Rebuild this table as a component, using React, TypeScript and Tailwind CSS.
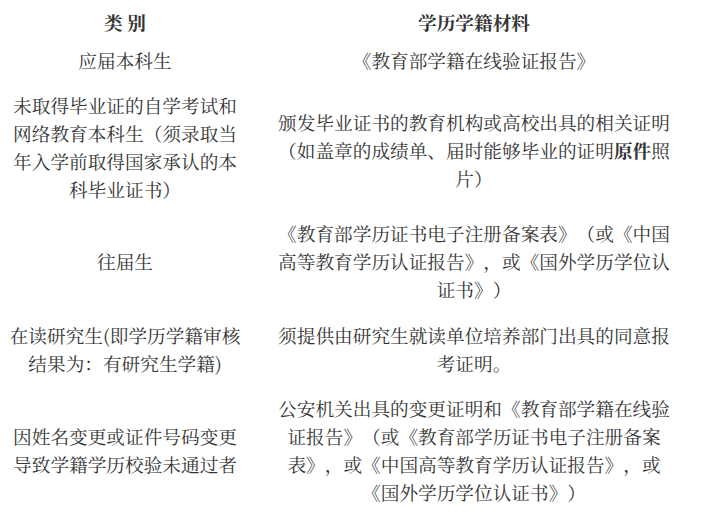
import React from "react";

type Row = {
  left: React.ReactNode;
  right: React.ReactNode;
  pad: string;
  rightPad?: string;
};

const rows: Row[] = [
  {
    left: "应届本科生",
    right: "《教育部学籍在线验证报告》",
    pad: "pt-[5px] pb-[8px]",
  },
  {
    left: "未取得毕业证的自学考试和网络教育本科生（须录取当年入学前取得国家承认的本科毕业证书）",
    right: (
      <>
        颁发毕业证书的教育机构或高校出具的相关证明（如盖章的成绩单、届时能够毕业的证明
        <b className="font-bold">原件</b>照片）
      </>
    ),
    pad: "pt-[9px] pb-[8px]",
    rightPad: "pt-[6px]",
  },
  {
    left: "往届生",
    right: "《教育部学历证书电子注册备案表》（或《中国高等教育学历认证报告》，或《国外学历学位认证书》）",
    pad: "pt-[8px] pb-[9px]",
  },
  {
    left: "在读研究生(即学历学籍审核结果为：有研究生学籍)",
    right: "须提供由研究生就读单位培养部门出具的同意报考证明。",
    pad: "pt-[9px] pb-[8px]",
  },
  {
    left: "因姓名变更或证件号码变更导致学籍学历校验未通过者",
    right: "公安机关出具的变更证明和《教育部学籍在线验证报告》（或《教育部学历证书电子注册备案表》，或《中国高等教育学历认证报告》，或《国外学历学位认证书》）",
    pad: "pt-[9px] pb-[8px]",
  },
];

export default function App() {
  return (
    <div
      className="w-[702px] h-[518px] bg-white text-[#333] text-[18.67px] leading-[28px] overflow-hidden [text-spacing-trim:space-all]"
      style={{
        fontFamily:
          '"Noto Serif CJK SC", "Liberation Serif", "Noto Sans CJK SC", serif',
      }}
    >
      <div className="grid grid-cols-[250px_448px]">
        {/* 表头 */}
        <div className="px-[8px] pt-[8px] pb-[5px] text-center font-bold">
          类 别
        </div>
        <div className="px-[24px] pt-[8px] pb-[5px] text-center font-bold">
          学历学籍材料
        </div>

        {rows.map((r, i) => (
          <React.Fragment key={i}>
            <div
              className={`flex items-center justify-center px-[8px] text-center ${r.pad}`}
            >
              <p>{r.left}</p>
            </div>
            <div
              className={`flex items-center justify-center px-[24px] text-center ${r.pad}`}
            >
              <p className={r.rightPad ?? ""}>{r.right}</p>
            </div>
          </React.Fragment>
        ))}
      </div>
    </div>
  );
}
